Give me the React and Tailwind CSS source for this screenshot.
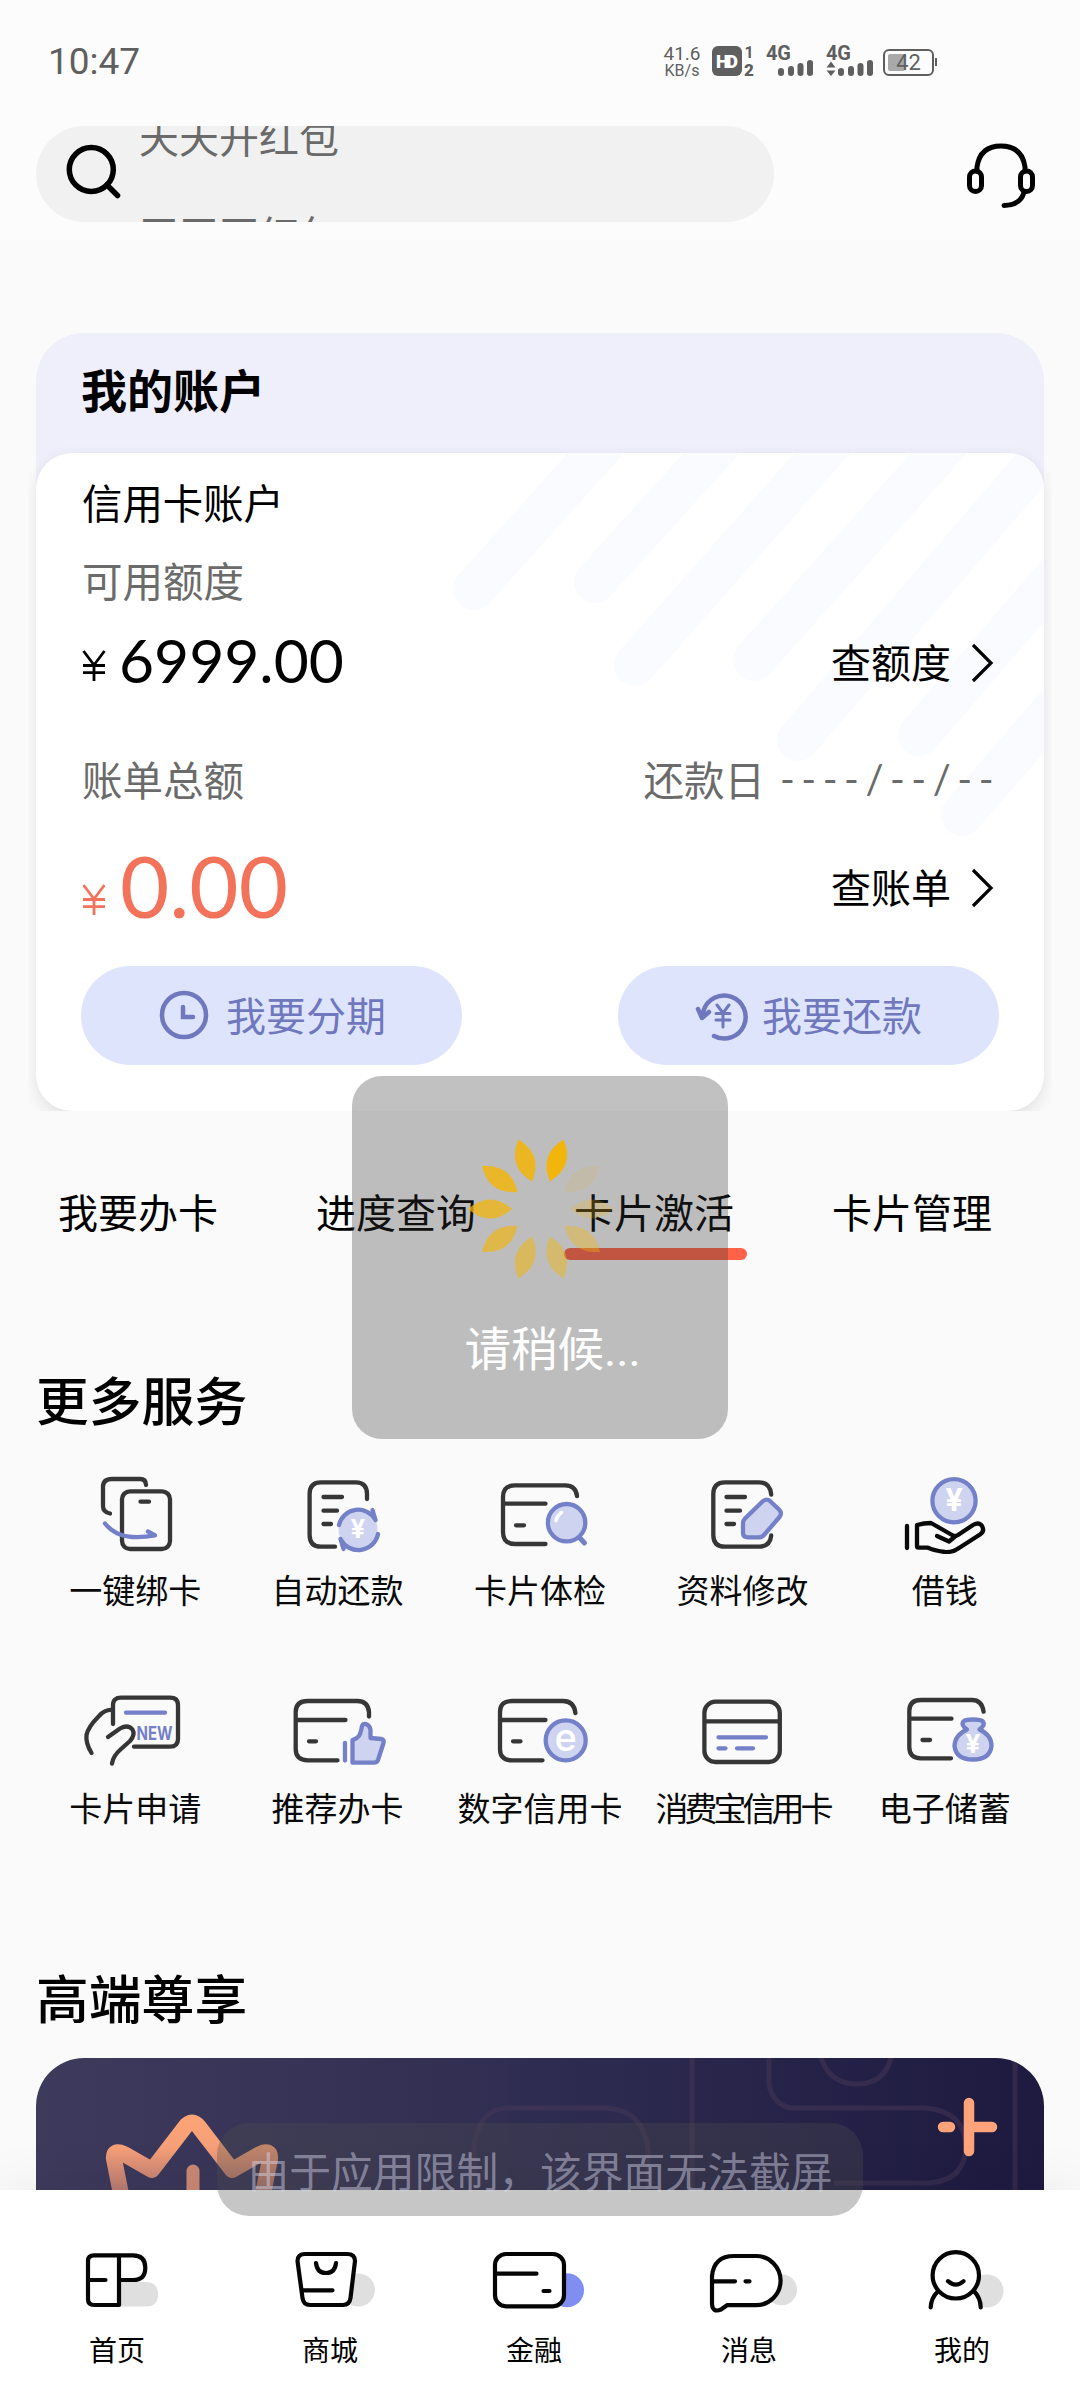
import React from 'react';
import clsx from 'clsx';

const INK = '#363636';
const BLUE = '#7480c8';
const PALE = '#ced3ef';

// Line icon canvas used by the service grid
function ServiceSvg({ children }) {
  return (
    <svg width="120" height="80" viewBox="0 0 120 80" fill="none" stroke={INK} strokeWidth="4.3" strokeLinecap="round" strokeLinejoin="round">
      {children}
    </svg>
  );
}

function Glyph({ x, y, size, children, fill = '#fff', weight = 700, ...rest }) {
  return (
    <text x={x} y={y} fontSize={size} fill={fill} stroke="none" textAnchor="middle" fontWeight={weight} className="font-['Inter',sans-serif]" {...rest}>
      {children}
    </text>
  );
}

const BindIcon = () => (
  <ServiceSvg>
    <path d="M71 11 Q71 5 65 5 H37 Q28 5 28 13 V32 Q28 38 35 39.5" />
    <rect x="47" y="17.3" width="48" height="57.7" rx="8" />
    <path d="M65.5 27.7 H74" />
    <path d="M30 49.5 Q40 62 57 63 Q69 63.5 80 61.3 L73 57.5" stroke={BLUE} />
  </ServiceSvg>
);

const AutoRepayIcon = () => (
  <ServiceSvg>
    <path d="M89 25 V20 Q89 8.3 78 8.3 H43 Q31.6 8.3 31.6 20 V61 Q31.6 72.7 43 72.7 H57" />
    <path d="M45.5 23 H64 M45.5 36.7 H59 M45.5 50 H53" />
    <circle cx="80" cy="55" r="19.5" fill={PALE} stroke="none" />
    <path d="M61 51 A19.7 19.7 0 0 1 97.5 46 L94.5 36 M100 60 A20 20 0 0 1 62.5 65 L65.5 75" stroke={BLUE} />
    <Glyph x="80" y="63.5" size="26">¥</Glyph>
  </ServiceSvg>
);

const CheckupIcon = () => (
  <ServiceSvg>
    <path d="M97 22 Q96 11.3 85 11.3 H35 Q23 11.3 23 23 V58 Q23 70 35 70 H65.5 M24 29.7 H65.5 M36 51.3 H44" />
    <path d="M99 63 L104.5 69" stroke={BLUE} strokeWidth="5" />
    <circle cx="86.6" cy="48.7" r="18.7" fill={PALE} stroke={BLUE} />
    <path d="M76 46.5 Q77.5 41 81.5 38.5" stroke="#fff" strokeWidth="3.5" />
  </ServiceSvg>
);

const EditInfoIcon = () => (
  <ServiceSvg>
    <path d="M89.2 20.5 Q88 8.3 77 8.3 H43 Q31.3 8.3 31.3 20 V61 Q31.3 72.7 43 72.7 H77 Q88 72.7 89.2 61.5" />
    <path d="M44.5 23 H63 M44.5 36.7 H58 M44.5 50 H52" />
    <path
      d="M80.5 27.5 Q84.5 24 88 27 L97 35.5 Q100.5 39 97.5 43 L82 61 Q80 63.3 77 63.3 H66 Q61 63.3 61 59 V49 Q61 46.5 63 44.5 Z"
      fill={PALE}
      stroke={BLUE}
    />
  </ServiceSvg>
);

const LoanIcon = () => (
  <ServiceSvg>
    <circle cx="69" cy="26.7" r="21.6" fill={PALE} stroke={BLUE} />
    <Glyph x="69" y="37" size="31">¥</Glyph>
    <g stroke="#0a0a0a">
      <path d="M22 52 V74" />
      <path d="M32 51 Q39 49 46 49 L67 61 Q70 63 73 61 L88 51 Q94 47.5 97 52 Q100 57 95 60.5 L74 74 Q68 78.5 60 78 Q50 77 43 73.7 H33.5 Q32 73.7 32 72 Z" />
      <path d="M52 62 L64 67.5 L70 62.5" />
    </g>
  </ServiceSvg>
);

const ApplyIcon = () => (
  <ServiceSvg>
    <path d="M38 32 V13 Q38 5.7 46 5.7 H95 Q103 5.7 103 13 V47 Q103 54.7 95 54.7 H59" />
    <path d="M37 18 Q30 17.5 24 24 Q13 35 11.5 43 Q10.5 51 16.5 61" />
    <path d="M33 45 L45 36.5 Q53 32 57.5 37.5 Q60.5 42.5 55 49 L46 57 Q38 64 37 71.5" />
    <path d="M51 20.7 H90" stroke={BLUE} />
    <Glyph x="79.5" y="47.5" size="18.5" fill={BLUE} textLength="36" lengthAdjust="spacingAndGlyphs">NEW</Glyph>
  </ServiceSvg>
);

const RecommendIcon = () => (
  <ServiceSvg>
    <path d="M91 24.5 V20 Q90 9 79 9 H30 Q17.7 9 17.7 20 V57 Q17.7 68.3 30 68.3 H59.5 M19 28 H67.5 M31 49.3 H38" />
    <path d="M67 51 V68.5" stroke={BLUE} />
    <path
      d="M74.5 48 Q80.5 46 82 42 Q83.5 38 84 34 Q85 31.5 88 32 Q92 33.5 92.5 38 L92.5 46 L103 47 Q106.5 47.5 105.5 51 L100 68 Q99 70.7 96 70.7 H74.5 Z"
      fill={PALE}
      stroke={BLUE}
    />
  </ServiceSvg>
);

const DigitalCardIcon = () => (
  <ServiceSvg>
    <path d="M95.4 21 Q94 9 83 9 H32 Q20 9 20 20 V57 Q20 68.3 32 68.3 H62.5 M21 28 H65.5 M33 49.3 H40.5" />
    <circle cx="85.7" cy="48.3" r="20" fill={PALE} stroke={BLUE} />
    <Glyph x="85.7" y="58.5" size="38" weight={500}>e</Glyph>
  </ServiceSvg>
);

const ConsumeCardIcon = () => (
  <ServiceSvg>
    <rect x="22.4" y="9.7" width="75.4" height="60.3" rx="11" />
    <path d="M24 29.3 H97" />
    <path d="M36.5 45.3 H84 M36.5 56.3 H43.5 M55 56.3 H71" stroke={BLUE} />
  </ServiceSvg>
);

const SavingsIcon = () => (
  <ServiceSvg>
    <path d="M98.6 19.7 Q97 8 87 8 H36 Q24.3 8 24.3 19 V55 Q24.3 66.3 36 66.3 H66 M26 26.7 H66.5 M37.5 48 H45" />
    <path
      d="M82 37.5 Q75.5 33 78.5 29.5 Q80 27.5 88 27.5 Q96 27.5 98 29.5 Q100.5 33 94.5 37.5 Q106.5 43 106.5 54 Q105 67.5 88 67.5 Q71 67.5 69.5 54 Q70 43 82 37.5 Z"
      fill={PALE}
      stroke={BLUE}
    />
    <Glyph x="88" y="61" size="26">¥</Glyph>
  </ServiceSvg>
);

const services = [
  { label: '一键绑卡', Icon: BindIcon },
  { label: '自动还款', Icon: AutoRepayIcon },
  { label: '卡片体检', Icon: CheckupIcon },
  { label: '资料修改', Icon: EditInfoIcon },
  { label: '借钱', Icon: LoanIcon },
  { label: '卡片申请', Icon: ApplyIcon },
  { label: '推荐办卡', Icon: RecommendIcon },
  { label: '数字信用卡', Icon: DigitalCardIcon },
  { label: '消费宝信用卡', Icon: ConsumeCardIcon, tight: true },
  { label: '电子储蓄', Icon: SavingsIcon },
];

function NavSvg({ children }) {
  return (
    <svg width="110" height="70" viewBox="0 0 110 70" fill="none" stroke="#050505" strokeWidth="4.2" strokeLinecap="round" strokeLinejoin="round">
      {children}
    </svg>
  );
}

const HomeIcon = () => (
  <NavSvg>
    <path d="M57 36 H84 Q96 36 96 48.2 Q96 60.5 84 60.5 H57 Z" fill="#dfdfdf" stroke="none" />
    <path d="M57 9.3 H32 Q26 9.3 26 15 V53 Q26 59 32 59 H57 Z M26 34 H43.5 M57 9.3 H71 Q83.3 9.3 83.3 21.7 Q83.3 34 71 34 H58" />
  </NavSvg>
);

const MallIcon = () => (
  <NavSvg>
    <circle cx="83.4" cy="44" r="16.5" fill="#dfdfdf" stroke="none" />
    <path d="M30 8 H72 Q80 8 80 15 L75.5 52 Q74.5 59 68 59 H35 Q28.5 59 27.5 52 L22.5 15 Q22.5 8 30 8 Z" fill="#fff" />
    <path d="M41 17 Q42 27 51 27 Q60 27 61 17 M28 44.3 H57.5" />
  </NavSvg>
);

const FinanceIcon = () => (
  <NavSvg>
    <circle cx="88" cy="44.3" r="17" fill="#7f8ef0" stroke="none" />
    <rect x="16" y="8" width="69" height="52.3" rx="11" fill="#fff" />
    <path d="M17 27.7 H57.5 M64.5 45 H70.5" />
  </NavSvg>
);

const MessageIcon = () => (
  <NavSvg>
    <circle cx="87.5" cy="43.7" r="15.5" fill="#dfdfdf" stroke="none" />
    <path d="M18 30 Q20 10 40 10 H62 A24.5 24.5 0 0 1 62 59.2 H33 L27 63.5 Q18.5 67 18 58 Z" fill="#fff" />
    <path d="M19 35.3 H41 M51.5 35.3 H55.5" />
  </NavSvg>
);

const MineIcon = () => (
  <NavSvg>
    <circle cx="80" cy="45" r="16.5" fill="#dfdfdf" stroke="none" />
    <path d="M23.7 62 Q23.7 52 30.6 46 H67 Q74 52 74 62 V66 H23.7 Z" fill="#fff" stroke="none" />
    <path d="M23.7 61.5 Q24 52 30.6 45.7 M73.7 61.5 Q73.5 52 67.5 45.7" />
    <circle cx="48.8" cy="29.3" r="23.2" fill="#fff" />
    <path d="M41 35.2 Q48.8 42 56.5 35.2" />
  </NavSvg>
);

const tabs = [
  { label: '首页', Icon: HomeIcon, gap: 'ml-[62px]' },
  { label: '商城', Icon: MallIcon, gap: 'ml-[103px]' },
  { label: '金融', Icon: FinanceIcon, gap: 'ml-[94px]' },
  { label: '消息', Icon: MessageIcon, gap: 'ml-[105px]' },
  { label: '我的', Icon: MineIcon, gap: 'ml-[103px]' },
];

const quickLinks = ['我要办卡', '进度查询', '卡片激活', '卡片管理'];

function StatusBar() {
  return (
    <div className="flex h-[126px] items-start justify-between pl-[48px] pr-[136px] pt-[41px] font-['Roboto',sans-serif] text-[#5f5f5f]">
      <span className="text-[37px] leading-[42px]">10:47</span>
      <div className="flex">
        <div className="mt-[4px] w-[42px] text-center leading-[17px]">
          <div className="text-[19px]">41.6</div>
          <div className="text-[16px]">KB/s</div>
        </div>
        <svg width="234" height="40" viewBox="0 0 234 40" fill="#5f5f5f" className="ml-[7px] font-['Roboto',sans-serif]">
          <rect x="2" y="5" width="30" height="30" rx="6" />
          <text x="17" y="27" fontSize="18" fontWeight="900" fill="#fff" textAnchor="middle" textLength="22">HD</text>
          <text x="39" y="17" fontSize="16" fontWeight="700" textAnchor="middle">1</text>
          <text x="39" y="34.5" fontSize="17" fontWeight="900" textAnchor="middle">2</text>
          <text x="56" y="19" fontSize="20" fontWeight="700" textLength="25">4G</text>
          <g stroke="#5f5f5f" strokeWidth="6" strokeLinecap="round">
            <path d="M71 30 V32 M81 28 V32 M90.5 25 V32 M100 22 V32" />
            <path d="M131 30 V32 M141 28 V32 M150.5 25 V32 M160 22 V32" />
          </g>
          <text x="116" y="19" fontSize="20" fontWeight="700" textLength="25">4G</text>
          <path d="M116.5 26.5 L121 20.5 L125.5 26.5 Z M116.5 29.5 L121 35 L125.5 29.5 Z" />
          <rect x="174" y="9" width="49" height="25" rx="5" fill="none" stroke="#5f5f5f" strokeWidth="2" />
          <rect x="178" y="13" width="17" height="17" rx="2" fill="#a9a9a9" />
          <rect x="225" y="17" width="2" height="8" />
          <text x="198.5" y="29" fontSize="22" textAnchor="middle">42</text>
        </svg>
      </div>
    </div>
  );
}

function SearchRow() {
  return (
    <div className="flex items-center pl-9 pr-[41px]">
      <div className="flex h-24 w-[738px] overflow-hidden rounded-full bg-[#f1f1f1]">
        <svg width="60" height="60" viewBox="0 0 60 60" fill="none" stroke="#000" strokeWidth="5.5" strokeLinecap="round" className="ml-[28px] mt-[16px]">
          <circle cx="27.3" cy="27.5" r="22" />
          <path d="M43 43 L53.5 53.5" />
        </svg>
        {/* hint ticker, caught between two lines */}
        <div className="-mt-[17px] ml-[15px] text-[40px] leading-[54px] text-[#6a6a6a]">
          <div>天天开红包</div>
          <div className="mt-[43px]">天天开红包</div>
        </div>
      </div>
      <svg width="76" height="76" viewBox="0 0 76 76" fill="none" stroke="#000" strokeWidth="5" strokeLinecap="round" className="ml-auto mt-[2px]">
        <path d="M14 34 V30 Q17 9 38 9 Q59 9 62 30 V34" />
        <rect x="6.5" y="34" width="12" height="20.5" rx="6" />
        <rect x="57.5" y="34" width="12" height="20.5" rx="6" />
        <path d="M61 55 Q58 68 41 68.5" />
      </svg>
    </div>
  );
}

const Chevron = () => (
  <svg width="24" height="42" viewBox="0 0 24 42" fill="none" stroke="#000" strokeWidth="3.2" className="ml-[20px] mt-[3px]">
    <path d="M2 3 L20 21 L2 39" />
  </svg>
);

const Yuan = () => (
  <svg width="24" height="31" viewBox="0 0 24 31" fill="none" stroke="currentColor" strokeWidth="2.8">
    <path d="M1.5 1 L12 15 L22.5 1 M12 15 V31 M1 15.5 H23 M1 22.7 H23" />
  </svg>
);

function AccountCard() {
  return (
    <section className="mx-[28px] mt-[93px] overflow-hidden px-2">
      <div className="h-[170px] rounded-t-[48px] bg-[#efeffb] pl-[45px] pt-[25px] text-[46px] font-bold leading-[60px] text-black">我的账户</div>
      <div className="relative -mt-[50px] h-[658px] rounded-[36px] bg-white shadow-[0_6px_16px_rgba(0,0,0,0.1)]">
        <svg width="1008" height="658" viewBox="0 0 1008 658" fill="none" stroke="#fafbfe" strokeWidth="42" strokeLinecap="round" className="absolute inset-0 rounded-[36px]">
          <path d="M438 136 L578 -20 M559 129 L694 -20 M599 212 L804 -20 M718 207 L921 -20 M762 287 L1026 -20 M883 282 L1057 80 M926 362 L1058 210" />
        </svg>
        <div className="relative pl-[46px] pr-[49px] pt-[24px] text-[40px] leading-[50px] text-black">
          <div className="text-[40.4px]">信用卡账户</div>
          <div className="mt-[28px] text-[40.5px] text-[#6b6b6b]">可用额度</div>
          <div className="mt-[26px] flex h-[60px] items-center">
            <span className="pt-[9px]"><Yuan /></span>
            <span className="-mt-[2px] ml-[13px] font-['Lato',sans-serif] text-[60.5px] leading-[60px]">6999.00</span>
            <span className="ml-auto">查额度</span>
            <Chevron />
          </div>
          <div className="mt-[63px] flex justify-between text-[40.5px] text-[#6b6b6b]">
            <span>账单总额</span>
            <span className="-mr-[5px] flex">
              还款日
              <span className="ml-[15px] font-['Lato',sans-serif] text-[40px] tracking-[6.5px]">----/--/--</span>
            </span>
          </div>
          <div className="mt-[37px] flex h-[90px] items-center">
            <span className="pt-[26px] text-[#f3735a]"><Yuan /></span>
            <span className="-mt-[2px] ml-[14px] font-['Lato',sans-serif] text-[85px] leading-[90px] text-[#f3735a]">0.00</span>
            <span className="ml-auto">查账单</span>
            <Chevron />
          </div>
          <div className="ml-[-1px] mr-[-4px] mt-[35px] flex justify-between text-[#6f77bd]">
            <button className="flex h-[99px] w-[381px] items-center rounded-full bg-[#dfe4fd] pl-[76px]">
              <svg width="54" height="54" viewBox="0 0 54 54" fill="none" stroke="#6f77bd" strokeWidth="4.5" strokeLinecap="round">
                <circle cx="27" cy="26" r="22" />
                <path d="M26 18 V28 H36" />
              </svg>
              <span className="-mt-[4px] ml-[15px]">我要分期</span>
            </button>
            <button className="flex h-[99px] w-[381px] items-center rounded-full bg-[#dfe4fd] pl-[76px]">
              <svg width="54" height="54" viewBox="0 0 54 54" fill="none" stroke="#6f77bd" strokeWidth="4.5" strokeLinecap="round" strokeLinejoin="round">
                <path d="M20 47 A21.5 21.5 0 1 0 9.5 22 L8 29 M4 20 L8 29 L15 23" />
                <path d="M23 16 L29 24 L35 16 M29 24 V38 M22 24.5 H36 M22 31 H36" strokeWidth="3" />
              </svg>
              <span className="-mt-[4px] ml-[14px]">我要还款</span>
            </button>
          </div>
        </div>
      </div>
    </section>
  );
}

function QuickLinks() {
  return (
    <div className="ml-[58px] mt-[70px] flex gap-[98px] text-[40px] leading-[60px] text-black">
      {quickLinks.map((label) => (
        <div key={label} className="relative w-[160px] whitespace-nowrap">
          {label}
          {label === '卡片激活' && <span className="absolute -left-[10px] top-[67px] h-3 w-[183px] rounded-full bg-[#ff6347]" />}
        </div>
      ))}
    </div>
  );
}

function ServiceGrid() {
  return (
    <div className="mx-[34px] mt-[46px] grid grid-cols-5 gap-y-[81px]">
      {services.map(({ label, Icon, tight }) => (
        <div key={label} className="flex flex-col items-center">
          <Icon />
          <span className={clsx('mb-[2px] mt-[15px] whitespace-nowrap text-[33px] leading-[40px] text-[#0a0a0a]', tight && '-tracking-[4px]')}>{label}</span>
        </div>
      ))}
    </div>
  );
}

function PremiumBanner() {
  return (
    <div className="mx-9 mt-[32px] h-[132px] shrink-0 overflow-hidden rounded-t-[48px] bg-linear-to-r from-[#3e3a5c] via-[#302d52] to-[#1e1a40]">
      <svg width="1008" height="132" viewBox="0 0 1008 132" fill="none" strokeLinecap="round" strokeLinejoin="round">
        <defs>
          <linearGradient id="crown" x1="0" y1="55" x2="0" y2="140" gradientUnits="userSpaceOnUse">
            <stop offset="0" stopColor="#fca474" />
            <stop offset="0.4" stopColor="#f7a078" />
            <stop offset="1" stopColor="#a8716f" />
          </linearGradient>
        </defs>
        <g stroke="#4a3a58" strokeWidth="5" opacity="0.45">
          <path d="M656 0 V132 M979 0 V132" />
          <path d="M733 0 V26 Q736 45 754 50 H890 Q930 54 930 90 Q928 122 894 125 H800" />
          <path d="M785 0 Q794 26 821 26 Q848 26 855 0" />
          <path d="M438 140 V90 Q442 52 470 50 H570 Q608 52 612 92 V140" />
        </g>
        <path d="M85 136 L78 101 Q77 91 88 96 L116 112 L149 69 Q156 60 163 69 L196 112 L224 96 Q235 91 234 101 L227 136" stroke="url(#crown)" strokeWidth="16" />
        <path d="M157 113 V140" stroke="#c98674" strokeWidth="13" />
        <path d="M933 45 V93 M933 69 H956 M907 69 H914" stroke="#ffa37a" strokeWidth="10.5" />
      </svg>
    </div>
  );
}

function BottomNav() {
  return (
    <nav className="flex h-[218px] shrink-0 bg-white pt-[56px] shadow-[0_-8px_50px_rgba(0,0,0,0.05)]">
      {tabs.map(({ label, Icon, gap }) => (
        <div key={label} className={clsx('flex w-[110px] flex-col items-center', gap)}>
          <Icon />
          <span className="mt-[13px] text-[28px] leading-[40px] text-black">{label}</span>
        </div>
      ))}
    </nav>
  );
}

const petals = [
  { angle: 18, opacity: 1 },
  { angle: -18, opacity: 0.88 },
  { angle: -54, opacity: 0.84 },
  { angle: -90, opacity: 0.75 },
  { angle: -126, opacity: 0.65 },
  { angle: -162, opacity: 0.55 },
  { angle: 162, opacity: 0.45 },
  { angle: 126, opacity: 0.38 },
  { angle: 90, opacity: 0.22 },
  { angle: 54, opacity: 0.1 },
];

function LoadingOverlay() {
  return (
    <div className="absolute left-[352px] top-[1076px] flex h-[363px] w-[376px] flex-col items-center rounded-[30px] bg-[#363636]/[0.31] pt-[58px]">
      <svg width="150" height="150" viewBox="-75 -75 150 150" className="ml-[2px]">
        {petals.map(({ angle, opacity }) => (
          <path key={angle} d="M0 -73 Q19 -51 0 -29 Q-19 -51 0 -73 Z" fill="#f2b50c" opacity={opacity} transform={`rotate(${angle})`} />
        ))}
      </svg>
      <div className="ml-[24px] mt-[32px] w-[175px] overflow-hidden whitespace-nowrap text-[46.5px] leading-[60px] text-white">
        请稍候<span className="font-['Roboto',sans-serif]">...</span>
      </div>
    </div>
  );
}

export default function App() {
  return (
    <div className="relative flex h-[2408px] w-[1080px] flex-col overflow-hidden bg-[#fafafa] font-['Noto_Sans_CJK_SC',sans-serif]">
      <header className="h-[240px] shrink-0 bg-[#fcfcfc]">
        <StatusBar />
        <SearchRow />
      </header>
      <AccountCard />
      <QuickLinks />
      <h2 className="ml-[36px] mt-[127px] text-[52.8px] font-medium leading-[60px] text-black">更多服务</h2>
      <ServiceGrid />
      <h2 className="ml-[36px] mt-[137px] text-[52.8px] font-medium leading-[60px] text-black">高端尊享</h2>
      <PremiumBanner />
      <BottomNav />
      <LoadingOverlay />
      <div className="absolute left-[217px] top-[2123px] flex h-[93px] w-[646px] items-center justify-center whitespace-nowrap rounded-[32px] bg-[#4e4e4e]/[0.32] text-[41.8px] leading-[60px] text-[#dcdcf0]/45">
        由于应用限制，该界面无法截屏
      </div>
    </div>
  );
}
